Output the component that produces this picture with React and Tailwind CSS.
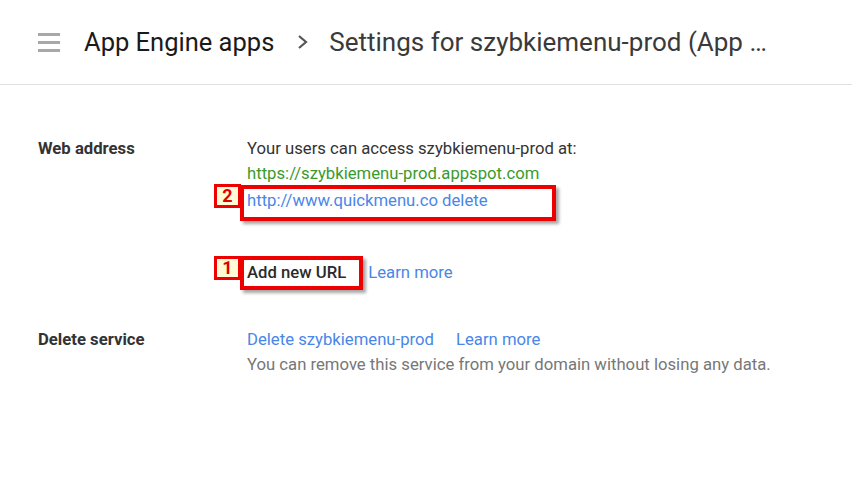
export default function App() {
  return (
    <div className="w-[852px] h-[501px] bg-white font-['Roboto',_'Noto_Sans',_sans-serif] overflow-hidden">
      <header className="h-[85px] border-b border-[#e0e0e0] flex items-center pl-[38px]">
        <div className="w-[22px] flex flex-col gap-[5px]">
          <span className="h-[3px] bg-[#a8a8a8]" />
          <span className="h-[3px] bg-[#a8a8a8]" />
          <span className="h-[3px] bg-[#a8a8a8]" />
        </div>
        <h1 className="ml-[24px] text-[25.5px] text-[#1a1a1a]">App Engine apps</h1>
        <svg className="ml-[22px] w-[14px] h-[16px]" viewBox="0 0 14 16">
          <polyline points="3,2 10,8 3,14" fill="none" stroke="#555" strokeWidth="2.2" />
        </svg>
        <h2 className="ml-[19px] text-[26px] text-[#3a3a3a]">
          Settings for szybkiemenu-prod (App …
        </h2>
      </header>

      <div className="pt-[51px] pl-[38px] text-[16.7px] leading-[25px]">
        <div className="flex">
          <div className="w-[209px] font-bold text-[#333]">Web address</div>
          <div>
            <div className="text-[#333]">Your users can access szybkiemenu-prod at:</div>
            <div className="text-[#3a9a2c]">https://szybkiemenu-prod.appspot.com</div>
            <div className="relative mt-[2px] text-[#4a86e8]">
              http://www.quickmenu.co delete
              <span className="absolute left-[-7px] top-[-3px] w-[316px] h-[36px] border-[4px] border-[#ee0000] shadow-[3px_3px_3px_rgba(0,0,0,0.35)]" />
              <span className="absolute left-[-33px] top-[-4px] w-[27px] h-[24px] border-[3px] border-[#ee0000] bg-[#fffbd6] text-[#e00000] font-bold text-[18px] leading-[18px] flex items-center justify-center">
                2
              </span>
            </div>
            <div className="relative mt-[47px] flex gap-[22px]">
              <span className="text-[#2a2a2a] font-medium">Add new URL</span>
              <span className="text-[#4a86e8]">Learn more</span>
              <span className="absolute left-[-7px] top-[-4px] w-[123px] h-[34px] border-[4px] border-[#ee0000] shadow-[3px_3px_3px_rgba(0,0,0,0.35)]" />
              <span className="absolute left-[-33px] top-[-4px] w-[27px] h-[24px] border-[3px] border-[#ee0000] bg-[#fffbd6] text-[#e00000] font-bold text-[18px] leading-[18px] flex items-center justify-center">
                1
              </span>
            </div>
          </div>
        </div>

        <div className="flex mt-[42px]">
          <div className="w-[209px] font-bold text-[#333]">Delete service</div>
          <div>
            <div className="flex gap-[22px] text-[#4a86e8]">
              <span>Delete szybkiemenu-prod</span>
              <span>Learn more</span>
            </div>
            <div className="text-[#777]">
              You can remove this service from your domain without losing any data.
            </div>
          </div>
        </div>
      </div>
    </div>
  );
}
